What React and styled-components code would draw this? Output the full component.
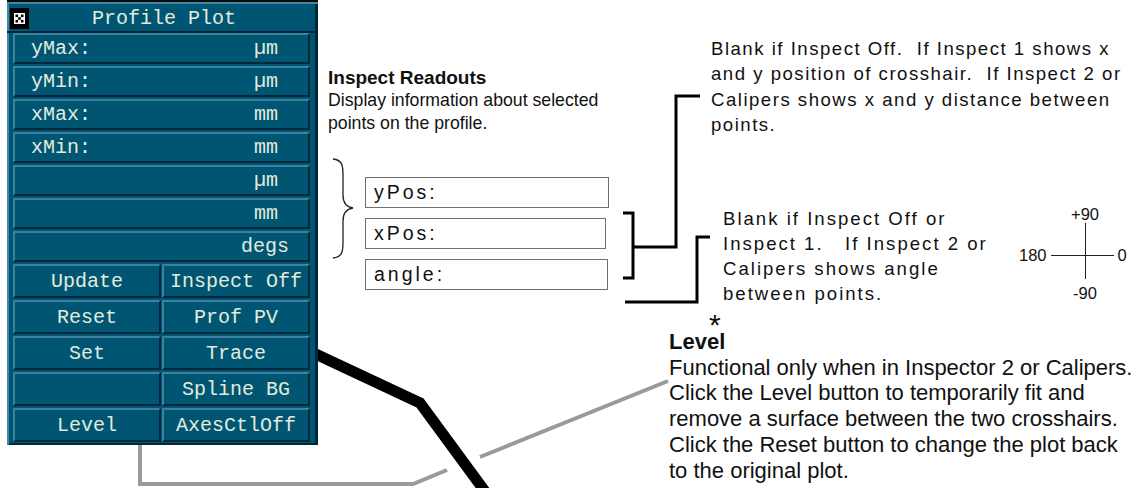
import React from 'react';
import styled, { createGlobalStyle } from 'styled-components';

const Global = createGlobalStyle`
  html, body { margin: 0; padding: 0; background: #ffffff; }
  body { font-family: "Liberation Sans", Arial, sans-serif; color: #111; }
`;

const Canvas = styled.div`
  position: relative;
  width: 1137px;
  height: 488px;
  overflow: hidden;
  background: #ffffff;
`;

const Wires = styled.svg`
  position: absolute;
  left: 0;
  top: 0;
  z-index: 1;
  pointer-events: none;
`;

/* ---------- the Profile Plot panel ---------- */

const Panel = styled.section`
  position: relative;
  z-index: 2;
  margin-left: 7px;
  width: 311px;
  height: 445px;
  box-sizing: border-box;
  background: #005672;
  border-top: 2px solid #0a0a0a;
  box-shadow: inset 2px 0 0 #3f88a6, inset -3px 0 0 #00283a, inset 0 -2px 0 #00283a;
  display: flex;
  flex-direction: column;
  font-family: "Liberation Mono", "DejaVu Sans Mono", monospace;
  color: #e3ebdc;
`;

const TitleBar = styled.header`
  display: grid;
  grid-template-columns: 22px 1fr 22px;
  align-items: center;
  height: 27px;
  padding-left: 3px;
  border-top: 2px solid #3f88a6;
  border-bottom: 2px solid #00283a;
`;

const CloseBox = styled.div`
  width: 19px;
  height: 21px;
  margin-top: 2px;
  background: #000;
  display: flex;
  align-items: center;
  justify-content: center;
`;

const Title = styled.h1`
  margin: 0;
  padding-top: 3px;
  font-size: 20px;
  font-weight: normal;
  line-height: 24px;
  text-align: center;
  white-space: pre;
`;

const Controls = styled.div`
  display: grid;
  grid-template-columns: 1fr 1fr;
  grid-template-rows: repeat(7, 31px) repeat(5, 34px);
  gap: 2px 1px;
  padding: 0 8px 0 6px;
`;

const Btn = styled.div`
  box-sizing: border-box;
  grid-column: ${(p) => (p.$wide ? '1 / -1' : 'auto')};
  display: flex;
  align-items: center;
  justify-content: ${(p) => (p.$wide ? 'space-between' : 'center')};
  padding: ${(p) => (p.$wide ? `0 ${p.$unitPad}px 0 16px` : '0')};
  background: #005672;
  border-top: 2px solid #3a82a0;
  border-left: 2px solid #3a82a0;
  border-bottom: 2px solid #00283a;
  border-right: 2px solid #00283a;
  font-size: 20px;
  white-space: pre;
`;

/* ---------- annotation canvas items ---------- */

const Note = styled.div`
  position: absolute;
  left: ${(p) => p.$x}px;
  top: ${(p) => p.$y}px;
  z-index: 3;
  font-size: ${(p) => p.$size}px;
  line-height: ${(p) => p.$lh}px;
  letter-spacing: ${(p) => p.$ls || 0}px;
  color: #111;
  white-space: pre;
`;

const Line = styled.div`
  display: block;
  font-weight: ${(p) => (p.$bold ? 'bold' : 'normal')};
  font-size: ${(p) => (p.$size ? `${p.$size}px` : 'inherit')};
`;

const Heading = styled.div`
  position: relative;
  font-weight: bold;
`;

const Star = styled.span`
  position: absolute;
  left: 40px;
  top: -11px;
  font-weight: normal;
  font-size: 30px;
  line-height: 14px;
  height: 14px;
`;

const Readouts = styled.div`
  position: absolute;
  left: 365px;
  top: 177px;
  z-index: 3;
  display: flex;
  flex-direction: column;
  gap: 10px;
`;

const ReadoutBox = styled.div`
  box-sizing: border-box;
  width: ${(p) => p.$w}px;
  height: 31px;
  border: 1px solid #707070;
  padding-left: 8px;
  font-size: 19.5px;
  line-height: 29px;
  letter-spacing: 3px;
  color: #111;
`;

const Cross = styled.div`
  position: absolute;
  left: 1019px;
  top: 206px;
  z-index: 3;
  display: grid;
  grid-template-columns: auto 63px auto;
  grid-template-rows: auto 56px auto;
  column-gap: 4px;
  font-size: 16.5px;
  line-height: 16.5px;
  color: #111;
`;

const CrossLabel = styled.span`
  grid-column: ${(p) => p.$col};
  grid-row: ${(p) => p.$row};
  justify-self: ${(p) => p.$justify || 'start'};
  margin-top: ${(p) => p.$mt || 0}px;
  margin-left: ${(p) => p.$ml || 0}px;
`;

const CrossSvg = styled.svg`
  grid-column: 2;
  grid-row: 2;
`;

const unitRows = [
  { label: 'yMax:', unit: 'µm', pad: 30 },
  { label: 'yMin:', unit: 'µm', pad: 30 },
  { label: 'xMax:', unit: 'mm', pad: 30 },
  { label: 'xMin:', unit: 'mm', pad: 30 },
  { label: '', unit: 'µm', pad: 30 },
  { label: '', unit: 'mm', pad: 30 },
  { label: '', unit: 'degs', pad: 19 },
];

const pairRows = [
  ['Update', 'Inspect Off'],
  ['Reset', 'Prof PV'],
  ['Set', 'Trace'],
  ['', 'Spline BG'],
  ['Level', 'AxesCtlOff'],
];

const topNote = [
  'Blank if Inspect Off.  If Inspect 1 shows x',
  'and y position of crosshair.  If Inspect 2 or',
  'Calipers shows x and y distance between',
  'points.',
];

const midNote = [
  'Blank if Inspect Off or',
  'Inspect 1.   If Inspect 2 or',
  'Calipers shows angle',
  'between points.',
];

const levelNote = [
  'Functional only when in Inspector 2 or Calipers.',
  'Click the Level button to temporarily fit and',
  'remove a surface between the two crosshairs.',
  'Click the Reset button to change the plot back',
  'to the original plot.',
];

function DiceIcon() {
  const cells = [
    [0, 0], [2, 0], [1, 1], [0, 2], [2, 2],
  ];
  return (
    <svg width="11" height="11" viewBox="0 0 11 11">
      <rect x="0" y="0" width="11" height="11" fill="#fff" />
      {cells.map(([cx, cy]) => (
        <rect key={`${cx}-${cy}`} x={1.5 + cx * 2.7} y={1.5 + cy * 2.7} width="2.6" height="2.6" fill="#000" />
      ))}
    </svg>
  );
}

export default function App() {
  return (
    <>
      <Global />
      <Canvas>
        <Wires width="1137" height="488" viewBox="0 0 1137 488">
          {/* profile line behind the panel */}
          <polyline points="290,342 420,403 495,505" fill="none" stroke="#000" strokeWidth="11" strokeLinejoin="miter" />
          {/* grey leader to the Level button */}
          <polyline points="140,438 140,484 413,484 447,470" fill="none" stroke="#9a9a9a" strokeWidth="4" />
          <line x1="480" y1="457" x2="668" y2="381" stroke="#9a9a9a" strokeWidth="4" />
          {/* brace */}
          <path d="M333,159 C342,160 343,165 343,175 V195 C343,203 346,207 353,208 C346,209 343,213 343,221 V242 C343,252 342,257 333,258" fill="none" stroke="#222" strokeWidth="1.3" />
          {/* bracket and connectors */}
          <path d="M623,213 H633 V278 H623" fill="none" stroke="#000" strokeWidth="3" />
          <path d="M633,247 H676 V96 H700" fill="none" stroke="#000" strokeWidth="3" />
          <path d="M625,302 H697 V237 H710" fill="none" stroke="#000" strokeWidth="3" />
        </Wires>

        <Panel>
          <TitleBar>
            <CloseBox>
              <DiceIcon />
            </CloseBox>
            <Title>Profile Plot</Title>
            <span />
          </TitleBar>
          <Controls>
            {unitRows.map((r, i) => (
              <Btn key={`u${i}`} $wide $unitPad={r.pad}>
                <span>{r.label}</span>
                <span>{r.unit}</span>
              </Btn>
            ))}
            {pairRows.map(([a, b], i) => (
              <React.Fragment key={`p${i}`}>
                <Btn>{a}</Btn>
                <Btn>{b}</Btn>
              </React.Fragment>
            ))}
          </Controls>
        </Panel>

        <Note $x={328} $y={66} $size={17.7} $lh={23}>
          <Line $bold $size={19}>Inspect Readouts</Line>
          <Line>Display information about selected</Line>
          <Line>points on the profile.</Line>
        </Note>

        <Readouts>
          <ReadoutBox $w={244}>yPos:</ReadoutBox>
          <ReadoutBox $w={241}>xPos:</ReadoutBox>
          <ReadoutBox $w={243}>angle:</ReadoutBox>
        </Readouts>

        <Note $x={711} $y={36} $size={18.6} $lh={25.3} $ls={1.5}>
          {topNote.map((t) => (
            <Line key={t}>{t}</Line>
          ))}
        </Note>

        <Note $x={723} $y={206} $size={18.6} $lh={25} $ls={2}>
          {midNote.map((t) => (
            <Line key={t}>{t}</Line>
          ))}
        </Note>

        <Cross>
          <CrossLabel $col={2} $row={1} $justify="center" $ml={6}>+90</CrossLabel>
          <CrossLabel $col={1} $row={2} $mt={24}>180</CrossLabel>
          <CrossSvg width="63" height="56" viewBox="0 0 63 56">
            <line x1="0" y1="32.5" x2="63" y2="32.5" stroke="#222" strokeWidth="1" />
            <line x1="34.5" y1="0" x2="34.5" y2="56" stroke="#222" strokeWidth="1" />
          </CrossSvg>
          <CrossLabel $col={3} $row={2} $mt={24}>0</CrossLabel>
          <CrossLabel $col={2} $row={3} $justify="center" $mt={6} $ml={6}>-90</CrossLabel>
        </Cross>

        <Note $x={669} $y={329} $size={22} $lh={25.7}>
          <Heading>
            Level
            <Star>*</Star>
          </Heading>
          {levelNote.map((t) => (
            <Line key={t}>{t}</Line>
          ))}
        </Note>
      </Canvas>
    </>
  );
}
